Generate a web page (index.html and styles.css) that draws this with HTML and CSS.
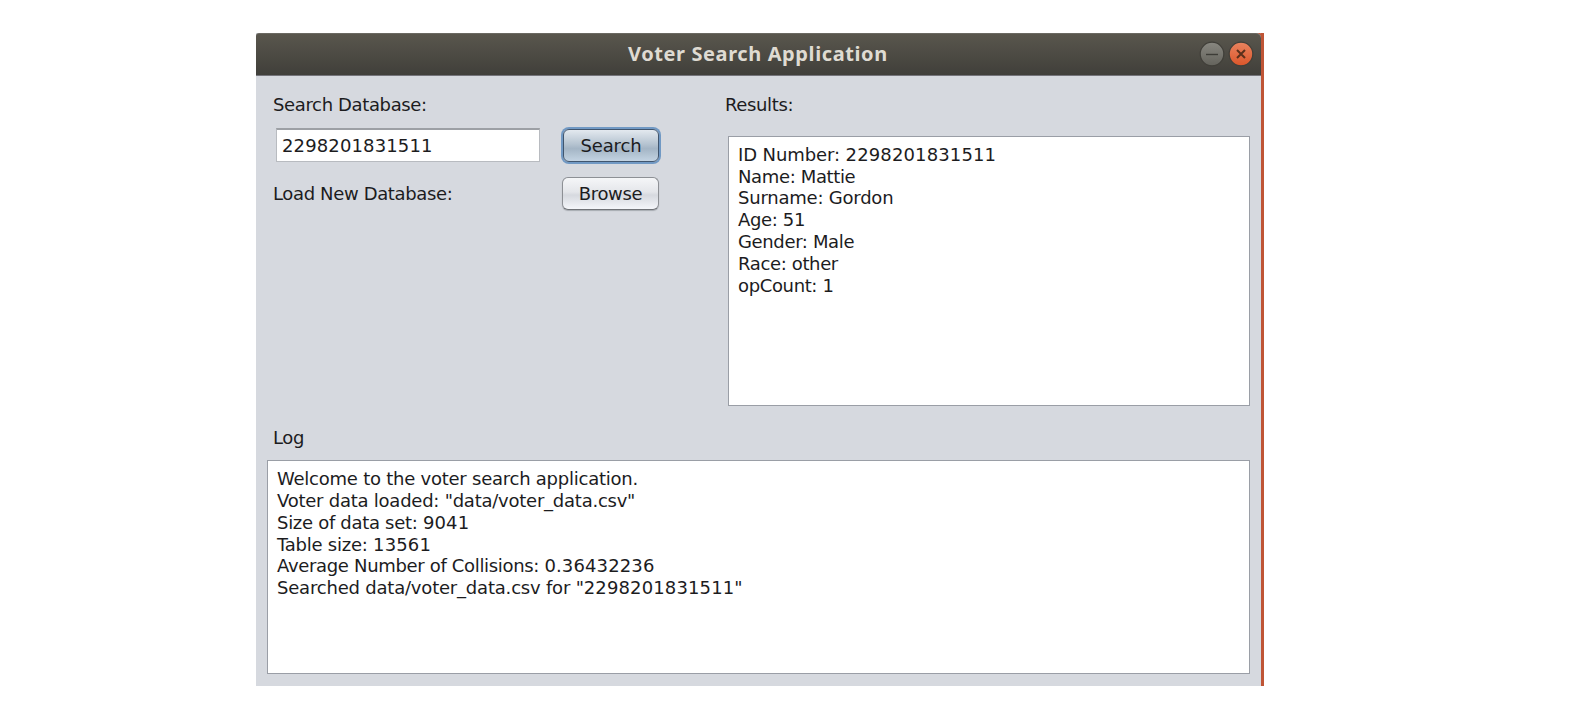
FILE: index.html
```html
<!DOCTYPE html>
<html lang="en">
<head>
<meta charset="utf-8">
<title>Voter Search Application</title>
<link rel="stylesheet" href="styles.css">
</head>
<body>
<main class="window">
  <header class="titlebar">
    <h1 class="title">Voter Search Application</h1>
    <svg class="controls" width="58" height="28" viewBox="0 0 58 28">
      <defs>
        <linearGradient id="gray" x1="0" y1="0" x2="0" y2="1"><stop offset="0" stop-color="#888780"/><stop offset="1" stop-color="#64635c"/></linearGradient>
        <linearGradient id="orange" x1="0" y1="0" x2="0" y2="1"><stop offset="0" stop-color="#e8835f"/><stop offset="1" stop-color="#db562a"/></linearGradient>
      </defs>
      <circle cx="14" cy="14" r="11.8" fill="url(#gray)" stroke="#403f39" stroke-width="1.2"/>
      <path d="M8 14.5h12" stroke="#3d3c37" stroke-width="1.4"/>
      <circle cx="43" cy="14" r="11.8" fill="url(#orange)" stroke="#403f39" stroke-width="1.2"/>
      <path d="M39 10l8 8M47 10l-8 8" stroke="#5a301b" stroke-width="2"/>
    </svg>
  </header>
  <div class="content">
    <section class="top">
      <div class="form">
        <label class="label search-label">Search Database:</label>
        <div class="row">
          <div class="field"><span class="num">2298201831511</span></div>
          <button class="button primary">Search</button>
        </div>
        <div class="row browse-row">
          <span class="label load-label">Load New Database:</span>
          <button class="button">Browse</button>
        </div>
      </div>
      <div class="results">
        <span class="label results-label">Results:</span>
        <div class="box results-box">
          <p class="id-line">ID Number: <span class="num">2298201831511</span></p>
          <p>Name: Mattie</p>
          <p class="surname-line">Surname: Gordon</p>
          <p>Age: 51</p>
          <p>Gender: Male</p>
          <p>Race: other</p>
          <p>opCount: 1</p>
        </div>
      </div>
    </section>
    <section class="log">
      <span class="label log-label">Log</span>
      <div class="box log-box">
        <p>Welcome to the voter search application.</p>
        <p>Voter data loaded: "data/voter_data.csv"</p>
        <p class="size-line">Size of data set: <span class="num">9041</span></p>
        <p>Table size: <span class="num">13561</span></p>
        <p class="average-line">Average Number of Collisions: <span class="num">0.36432236</span></p>
        <p class="searched-line">Searched data/voter_data.csv for "<span class="num">2298201831511</span>"</p>
      </div>
    </section>
  </div>
</main>
</body>
</html>
```
FILE: styles.css
```css
* { box-sizing: border-box; }
body {
  margin: 0;
  padding: 33px 0 0 256px;
  background: #fff;
  color: #1c1c1e;
  font-family: "DejaVu Sans", sans-serif;
  font-size: 18px;
  line-height: 22px;
  letter-spacing: -0.36px;
  white-space: nowrap;
}
p { margin: 0; }
.num { letter-spacing: 0.13px; }
.window {
  width: 1008px;
  height: 653px;
  background: #d6d9df;
  border-right: 3px solid #bf5536;
}
.titlebar {
  display: flex;
  align-items: center;
  height: 43px;
  padding: 0 5px 2px 372px;
  background: linear-gradient(#59564d, #403f3a);
  border-top: 1px solid #6b6962;
  border-bottom: 1px solid #74747a;
  border-radius: 3px 5px 0 0;
  box-shadow: 3px 0 0 #bf5536;
}
.title {
  margin: 0;
  color: #dfdbd2;
  font: bold 20px/28px "Noto Sans", sans-serif;
  letter-spacing: 0.6px;
}
.controls { margin-left: auto; }
.top {
  display: grid;
  grid-template-columns: 469px 1fr;
  height: 351px;
  padding-top: 18px;
}
.label { display: block; padding-left: 17px; }
.row {
  display: flex;
  justify-content: space-between;
  padding: 0 66px 0 20px;
  margin-top: 12px;
}
.browse-row { margin-top: 15px; padding-left: 0; }
.load-label { padding-top: 6px; }
.field {
  width: 264px;
  height: 34px;
  padding: 5px 5px 0;
  background: #fff;
  border: 1px solid #b8bbc0;
  border-top: 2px solid #9da0a5;
}
.button {
  width: 97px;
  height: 33px;
  padding: 0;
  border: 1px solid #8d9095;
  border-bottom-color: #707378;
  border-radius: 6px;
  background: linear-gradient(#f5f6f8, #e4e6ea 45%, #d6d9df 55%, #f4f6fa);
  color: inherit;
  font: inherit;
  letter-spacing: -0.3px;
  box-shadow: 0 1px 1px #a7abb1;
}
.primary {
  width: 96px;
  margin-top: 1px;
  border-color: #40556e;
  background: linear-gradient(#e3e9ef, #b6c4d1 45%, #a4b5c5 60%, #c3d3e2);
  letter-spacing: -0.1px;
  box-shadow: 0 0 0 2px #7199c4;
}
.results-label { padding-left: 0; }
.box {
  background: #fff;
  border: 1px solid #9a9ea6;
  line-height: 21.9px;
}
.results-box {
  width: 522px;
  height: 270px;
  margin: 20px 0 0 3px;
  padding: 6.6px 9px;
}
.id-line { letter-spacing: -0.1px; }
.surname-line { letter-spacing: -0.22px; }
.log-box {
  width: 983px;
  height: 214px;
  margin: 11px 0 0 11px;
  padding: 6.8px 9px;
  letter-spacing: -0.24px;
}
.size-line { letter-spacing: -0.3px; }
.average-line { letter-spacing: -0.33px; }
.searched-line { letter-spacing: -0.2px; }
```
